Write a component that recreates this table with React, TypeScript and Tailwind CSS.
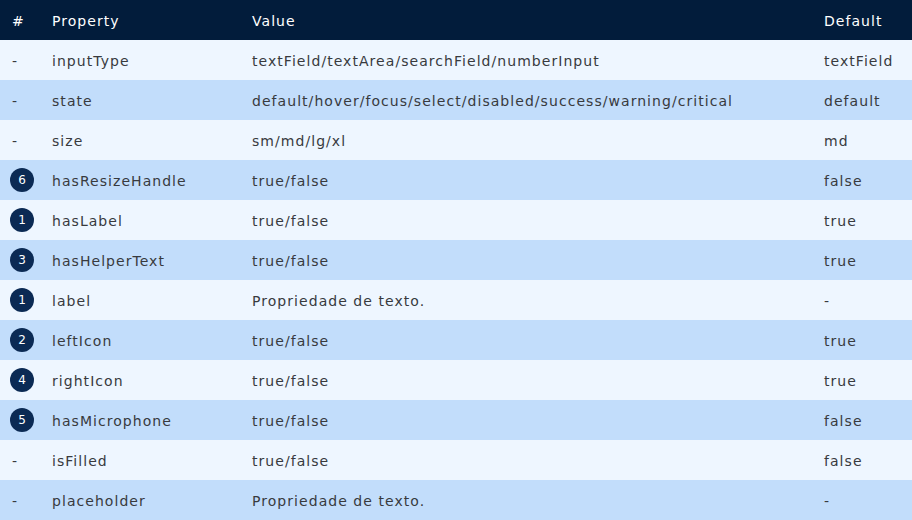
import React from 'react';

type Row = { badge?: number; property: string; value: string; def: string };

const rows: Row[] = [
  { property: 'inputType', value: 'textField/textArea/searchField/numberInput', def: 'textField' },
  { property: 'state', value: 'default/hover/focus/select/disabled/success/warning/critical', def: 'default' },
  { property: 'size', value: 'sm/md/lg/xl', def: 'md' },
  { badge: 6, property: 'hasResizeHandle', value: 'true/false', def: 'false' },
  { badge: 1, property: 'hasLabel', value: 'true/false', def: 'true' },
  { badge: 3, property: 'hasHelperText', value: 'true/false', def: 'true' },
  { badge: 1, property: 'label', value: 'Propriedade de texto.', def: '-' },
  { badge: 2, property: 'leftIcon', value: 'true/false', def: 'true' },
  { badge: 4, property: 'rightIcon', value: 'true/false', def: 'true' },
  { badge: 5, property: 'hasMicrophone', value: 'true/false', def: 'false' },
  { property: 'isFilled', value: 'true/false', def: 'false' },
  { property: 'placeholder', value: 'Propriedade de texto.', def: '-' },
];

export default function App() {
  return (
    <div
      className="w-[912px] h-[520px] text-[14px] tracking-[1.05px]"
      style={{ fontFamily: '"DejaVu Sans", sans-serif' }}
    >
      {/* Header */}
      <div className="grid grid-cols-[40px_200px_572px_100px] h-10 items-center bg-[#021c3b] text-white pt-[2px]">
        <div className="pl-3">#</div>
        <div className="pl-3">Property</div>
        <div className="pl-3">Value</div>
        <div className="pl-3">Default</div>
      </div>

      {rows.map((r, i) => (
        <div
          key={r.property}
          className={`grid grid-cols-[40px_200px_572px_100px] h-10 items-center text-[#383a3e] pt-[2px] ${
            i % 2 === 0 ? 'bg-[#eef6ff]' : 'bg-[#c2ddfb]'
          }`}
        >
          {r.badge ? (
            <div className="pl-[10px] -mt-[2px]">
              <span className="flex h-6 w-6 items-center justify-center rounded-full bg-[#0b2a54] text-[12px] text-white tracking-normal">
                {r.badge}
              </span>
            </div>
          ) : (
            <div className="pl-3">-</div>
          )}
          <div className="pl-3">{r.property}</div>
          <div className="pl-3">{r.value}</div>
          <div className="pl-3">{r.def}</div>
        </div>
      ))}
    </div>
  );
}
